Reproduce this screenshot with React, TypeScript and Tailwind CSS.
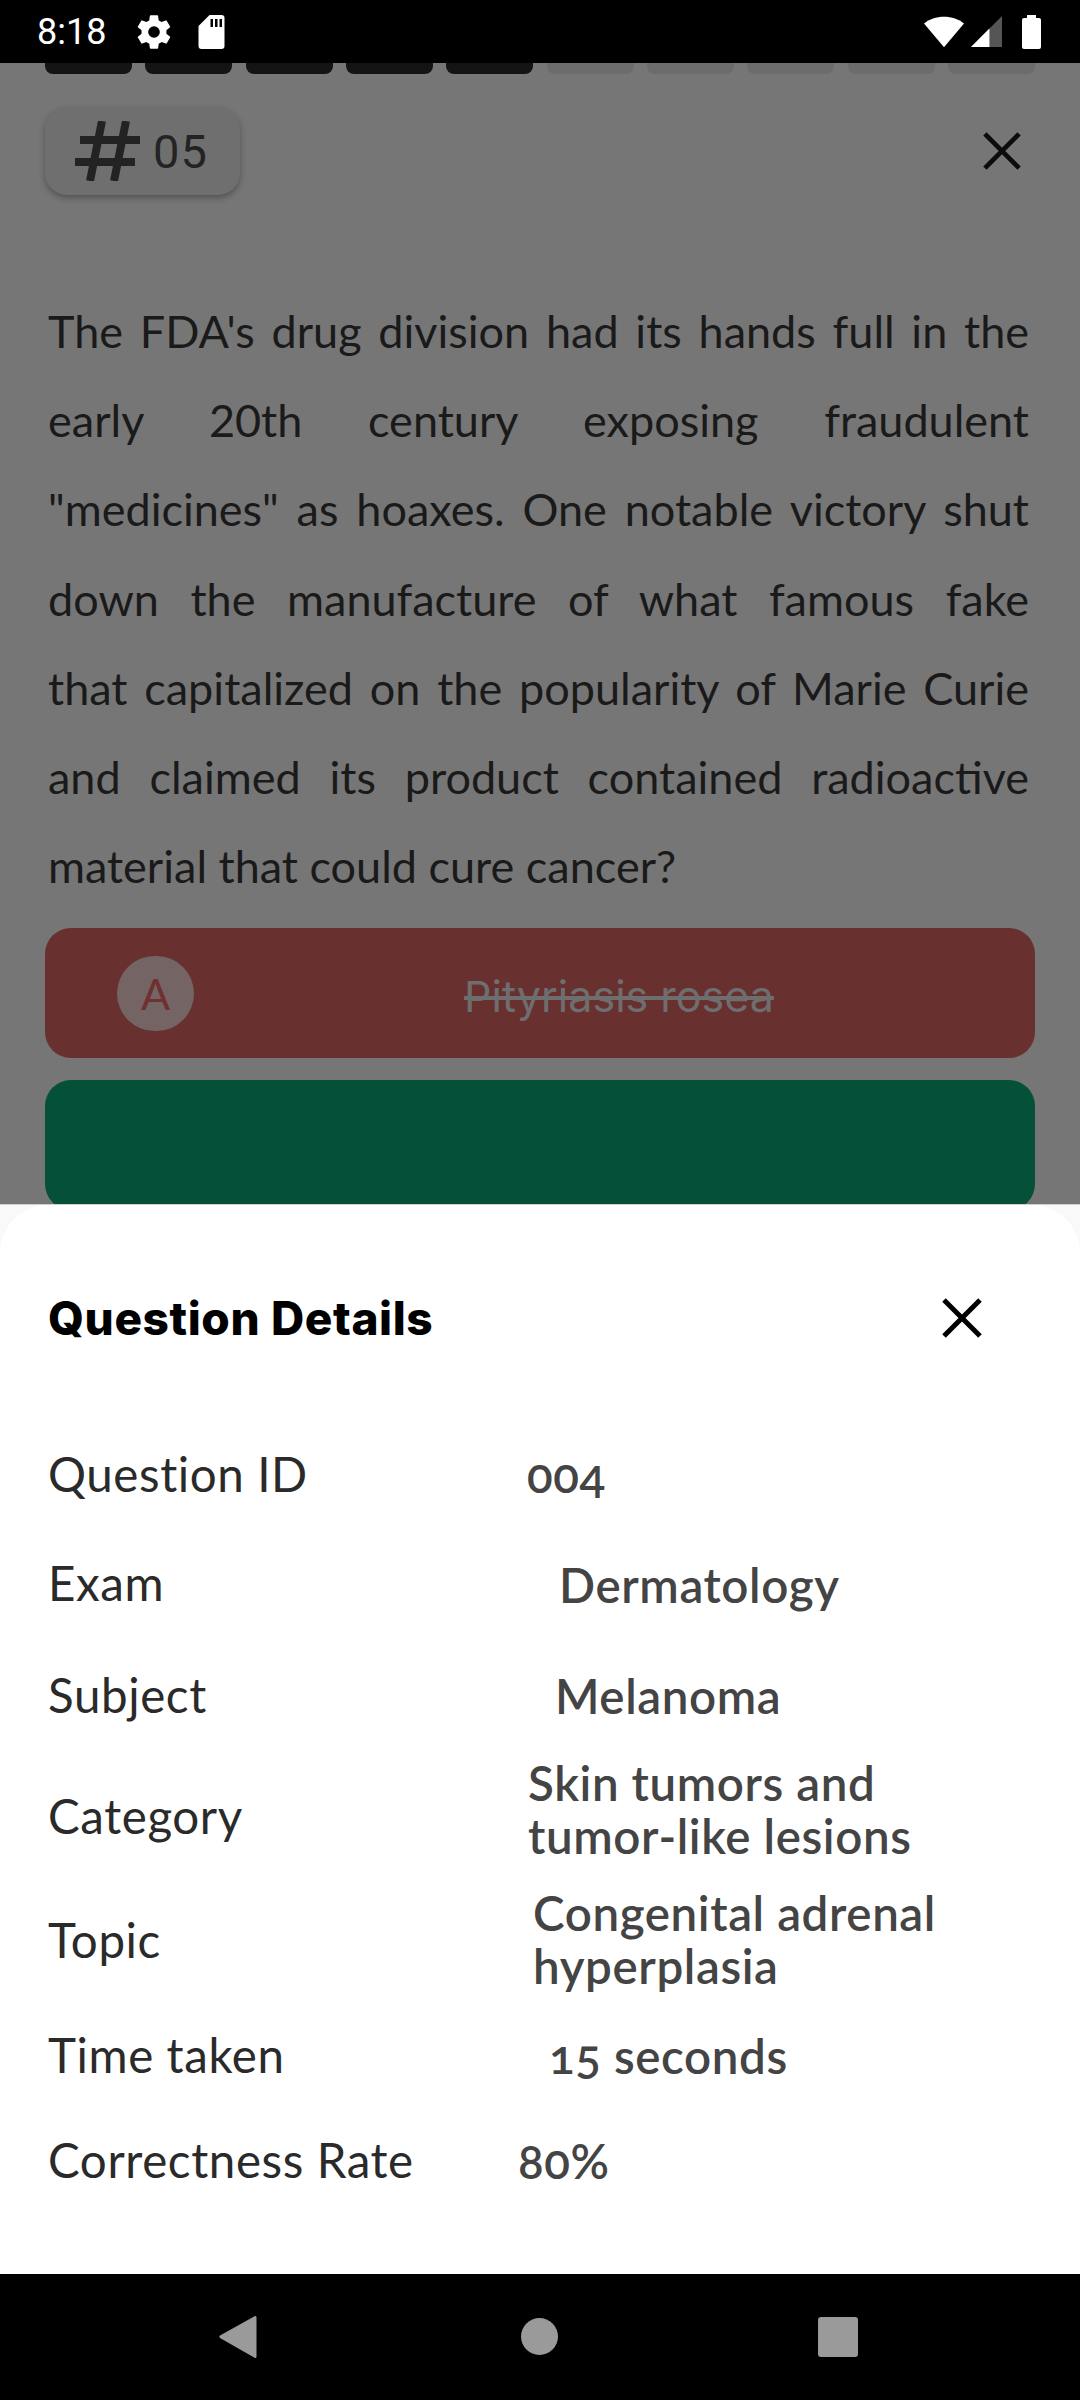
const questionLines = [
  "The FDA's drug division had its hands full in the",
  'early 20th century exposing fraudulent',
  '"medicines" as hoaxes. One notable victory shut',
  'down the manufacture of what famous fake',
  'that capitalized on the popularity of Marie Curie',
  'and claimed its product contained radioactive',
]
const questionLastLine = 'material that could cure cancer?'

const details = [
  { label: 'Question ID', value: '004', rowClass: 'h-[109px]', valueClass: 'pl-[9px] pt-[2px]' },
  { label: 'Exam', value: 'Dermatology', rowClass: 'h-[110px]', valueClass: 'pl-[41px] pt-[2px]' },
  { label: 'Subject', value: 'Melanoma', rowClass: 'h-[114px]', valueClass: 'pl-[37px]' },
  { label: 'Category', value: 'Skin tumors and tumor-like lesions', rowClass: 'h-[127px]', valueClass: 'pl-[10px] pr-[100px] pb-[14px]' },
  { label: 'Topic', value: 'Congenital adrenal hyperplasia', rowClass: 'h-[122px]', valueClass: 'pl-[15px] pr-[70px] pb-[3px]' },
  { label: 'Time taken', value: '15 seconds', rowClass: 'h-[108px]', valueClass: 'pl-[31px]' },
  { label: 'Correctness Rate', value: '80%', rowClass: 'h-[102px]', valueClass: 'pl-0' },
]

function CloseIcon({ className }: { className: string }) {
  return (
    <svg viewBox="0 0 40 40" className={className} fill="none" stroke="currentColor" strokeWidth="5">
      <path d="M2 2 38 38M38 2 2 38" />
    </svg>
  )
}

function StatusBar() {
  return (
    <div className="h-[63px] bg-black flex items-center justify-between pl-[37px] pr-[39px] shrink-0">
      <div className="flex items-center">
        <span className="text-white text-[36px] leading-none font-['Roboto',sans-serif]">8:18</span>
        <svg viewBox="0 0 24 24" className="w-[40px] h-[40px] ml-[28px] fill-white">
          <path d="M19.4 13c.04-.32.07-.66.07-1s-.03-.68-.07-1l2.1-1.65a.5.5 0 0 0 .12-.64l-2-3.46a.5.5 0 0 0-.6-.22l-2.49 1a7.3 7.3 0 0 0-1.69-.98l-.38-2.65A.49.49 0 0 0 14 2h-4a.49.49 0 0 0-.49.42l-.38 2.65c-.61.25-1.17.59-1.69.98l-2.49-1a.5.5 0 0 0-.61.22l-2 3.46a.49.49 0 0 0 .12.64L4.57 11c-.04.32-.07.66-.07 1s.03.68.07 1l-2.11 1.65a.5.5 0 0 0-.12.64l2 3.46c.12.22.39.3.61.22l2.49-1c.52.4 1.08.73 1.69.98l.38 2.65c.03.24.24.42.49.42h4c.25 0 .46-.18.49-.42l.38-2.65c.61-.25 1.17-.59 1.69-.98l2.49 1c.23.08.49 0 .61-.22l2-3.46a.5.5 0 0 0-.12-.64zM12 15.500a3.500 3.500 0 1 1 0-7 3.500 3.500 0 0 1 0 7z" />
        </svg>
        <svg viewBox="0 0 26 34" className="w-[27px] h-[34px] ml-[24px] fill-white">
          <path d="M11 0h12a3 3 0 0 1 3 3v28a3 3 0 0 1-3 3H3a3 3 0 0 1-3-3V11zM12 4v8h2.500V4zM16.500 4v8H19V4zM21 4v8h2.500V4z" fillRule="evenodd" />
        </svg>
      </div>
      <div className="flex items-center">
        <svg viewBox="0 0 42 32" className="w-[40px] h-[32px] fill-white">
          <path d="M21 0C13 0 5.500 2.500 0 7l21 25L42 7C36.500 2.500 29 0 21 0z" />
        </svg>
        <svg viewBox="0 0 32 32" className="w-[31px] h-[31px] ml-[7px]">
          <path d="M32 0v32H0z" fill="#555" />
          <path d="M19 13v19H0z" fill="#fff" />
        </svg>
        <div className="ml-[20px] w-[19px] h-[31px] mt-[3px] bg-white rounded-[2px] relative">
          <div className="absolute -top-[3px] left-[5px] w-[9px] h-[4px] bg-white" />
        </div>
      </div>
    </div>
  )
}

function NavBar() {
  return (
    <div className="h-[126px] bg-black relative shrink-0 flex items-center">
      <svg viewBox="0 0 38 42" className="absolute left-[219px] top-[42px] w-[38px] h-[42px] fill-[#9a9a9a]">
        <path d="M36 0c1 0 1.500.6 1.500 1.500v39c0 1-.5 1.500-1.500 1.500L1 22c-1-.7-1-1.500 0-2.500z" />
      </svg>
      <div className="absolute left-[521px] top-[44px] w-[37px] h-[37px] rounded-full bg-[#9a9a9a]" />
      <div className="absolute left-[818px] top-[43px] w-[40px] h-[40px] rounded-[3px] bg-[#9a9a9a]" />
    </div>
  )
}

export default function App() {
  return (
    <div className="w-[1080px] h-[2400px] flex flex-col overflow-hidden bg-[#767676] font-['Lato',sans-serif]">
      <StatusBar />

      <div className="relative flex-1 overflow-hidden">
        {/* Question behind the sheet */}
        <div className="px-[45px]">
          <div className="flex gap-[13.500px]">
            {Array.from({ length: 10 }).map((_, i) => (
              <div
                key={i}
                className={i < 5 ? 'flex-1 h-[11px] rounded-b-[8px] bg-[#141414]' : 'flex-1 h-[11px] rounded-b-[8px] bg-[#6c6c6c]'}
              />
            ))}
          </div>

          <div className="flex items-center justify-between mt-[33px] pr-[14px]">
            <div className="w-[195px] h-[88px] rounded-[22px] bg-[#6f6f6f] shadow-[0_3px_6px_rgba(0,0,0,0.3)] flex items-center pl-[29px]">
              <svg viewBox="0 0 67 60" className="w-[67px] h-[60px] text-[#232323]" fill="none" stroke="currentColor" strokeWidth="8">
                <path d="M28 0 16 60M52 0 40 60M6 19H66M1 41H61" />
              </svg>
              <span className="text-[#232323] text-[47px] leading-none ml-[12px] tracking-[1px] font-['Roboto',sans-serif]">05</span>
            </div>
            <CloseIcon className="w-[38px] h-[38px] text-[#0c0c0c]" />
          </div>

          <div className="mt-[92px] pl-[3px] pr-[6px] text-[45px] leading-[89.200px] text-[#1a1a1a]">
            {questionLines.map(line => (
              <p key={line} className="text-justify [text-align-last:justify]">{line}</p>
            ))}
            <p>{questionLastLine}</p>
          </div>

          <div className="mt-[17px] h-[130px] rounded-[26px] bg-[#693030] relative flex items-center justify-center pl-[158px] pt-[6px]">
            <div className="absolute left-[72px] top-[28px] w-[77px] h-[75px] rounded-full bg-[#756464] flex items-center justify-center text-[#6f3030] text-[43px]">A</div>
            <span className="text-[#6e6e6e] text-[43px] line-through font-['Inter',sans-serif]">Pityriasis rosea</span>
          </div>
          <div className="mt-[22px] h-[130px] rounded-[26px] bg-[#055038]" />
        </div>

        {/* Bottom sheet */}
        <div className="absolute left-0 right-0 bottom-0 h-[1070px] bg-[#f9f9f9] border-t border-[#d0d0d0]">
          <div className="h-full bg-white rounded-t-[48px]">
            <div className="flex items-center justify-between pl-[48px] pr-[98px] pt-[83px]">
              <h2 className="text-black text-[46px] leading-[60px] tracking-[0.600px] font-extrabold font-['Inter',sans-serif]">Question Details</h2>
              <CloseIcon className="w-[40px] h-[40px] text-black" />
            </div>
            <div className="mt-[71px]">
              {details.map(row => (
                <div key={row.label} className={`flex items-center pl-[48px] ${row.rowClass}`}>
                  <span className="w-[470px] shrink-0 text-[47.500px] tracking-[0.600px] text-[#2a2a2a]">{row.label}</span>
                  <span className={`text-[47.500px] leading-[53px] tracking-[0.600px] font-semibold oldstyle-nums text-[#444444] ${row.valueClass}`}>{row.value}</span>
                </div>
              ))}
            </div>
          </div>
        </div>
      </div>

      <NavBar />
    </div>
  )
}
